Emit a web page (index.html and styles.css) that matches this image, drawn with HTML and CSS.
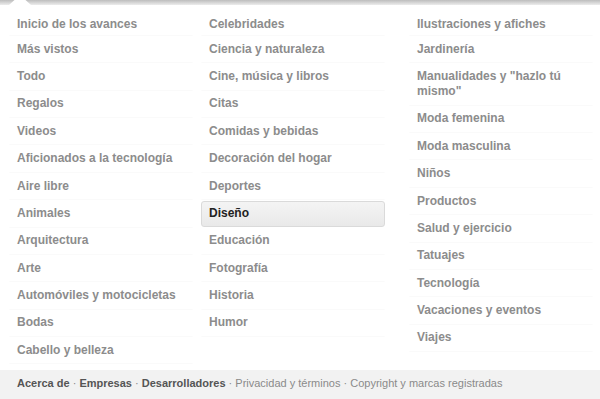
FILE: index.html
```html
<!DOCTYPE html>
<html lang="es">
<head>
    <meta charset="UTF-8">
    <meta name="viewport" content="width=device-width, initial-scale=1.0">
    <title>Categorías</title>
    <link rel="stylesheet" href="styles.css">
</head>
<body>
    <div class="menu">
        <div class="menu-top">
            <span class="caret"></span>
        </div>
        <div class="columns">
            <ul class="col">
                <li>Inicio de los avances</li>
                <li>Más vistos</li>
                <li>Todo</li>
                <li>Regalos</li>
                <li>Videos</li>
                <li>Aficionados a la tecnología</li>
                <li>Aire libre</li>
                <li>Animales</li>
                <li>Arquitectura</li>
                <li>Arte</li>
                <li>Automóviles y motocicletas</li>
                <li>Bodas</li>
                <li>Cabello y belleza</li>
            </ul>
            <ul class="col">
                <li>Celebridades</li>
                <li>Ciencia y naturaleza</li>
                <li>Cine, música y libros</li>
                <li>Citas</li>
                <li>Comidas y bebidas</li>
                <li>Decoración del hogar</li>
                <li>Deportes</li>
                <li class="selected">Diseño</li>
                <li>Educación</li>
                <li>Fotografía</li>
                <li>Historia</li>
                <li>Humor</li>
            </ul>
            <ul class="col">
                <li>Ilustraciones y afiches</li>
                <li>Jardinería</li>
                <li>Manualidades y "hazlo tú mismo"</li>
                <li>Moda femenina</li>
                <li>Moda masculina</li>
                <li>Niños</li>
                <li>Productos</li>
                <li>Salud y ejercicio</li>
                <li>Tatuajes</li>
                <li>Tecnología</li>
                <li>Vacaciones y eventos</li>
                <li>Viajes</li>
            </ul>
        </div>
        <footer class="menu-footer">
            <a class="strong" href="#">Acerca de</a> &middot;
            <a class="strong" href="#">Empresas</a> &middot;
            <a class="strong" href="#">Desarrolladores</a> &middot;
            <a href="#">Privacidad y términos</a> &middot;
            <a href="#">Copyright y marcas registradas</a>
        </footer>
    </div>
</body>
</html>
```

FILE: styles.css
```css
* {
    margin: 0;
    padding: 0;
    box-sizing: border-box;
}
body {
    font-family: 'Liberation Sans', Arial, sans-serif;
    background: white;
    color: #8c8c8c;
}
.menu {
    width: 600px;
    height: 399px;
    display: flex;
    flex-direction: column;
    overflow: hidden;
}
.menu-top {
    position: relative;
    height: 5px;
    background: linear-gradient(#bdbdbd, #d9d9d9 60%, #ececec);
}
.caret {
    position: absolute;
    left: 9px;
    top: 0;
    width: 22px;
    height: 5px;
    background: white;
    clip-path: polygon(25% 0, 75% 0, 100% 100%, 0 100%);
}
.columns {
    display: grid;
    grid-template-columns: 192px 208px 1fr;
    padding: 6px 0 0 9px;
    flex: 1;
}
.col {
    list-style: none;
}
.col li {
    width: 184px;
    padding: 5.7px 7px;
    font-size: 12px;
    font-weight: bold;
    line-height: 15px;
    border: 1px solid transparent;
    border-bottom-color: #fafafa;
    border-top: none;
}
.col li:first-child {
    padding-bottom: 3.3px;
}
.col li.selected {
    color: #222;
    background: linear-gradient(#f4f4f4, #e9e9e9);
    border: 1px solid #dadada;
    border-radius: 3px;
    padding: 4.2px 6px 4.2px 7px;
    margin: 1px 0;
}
.menu-footer {
    height: 29px;
    background: #f2f2f2;
    padding: 7px 17px 0;
    font-size: 11px;
    color: #888;
}
.menu-footer a {
    color: #8a8a8a;
    text-decoration: none;
}
.menu-footer a.strong {
    color: #555;
    font-weight: bold;
}
```
